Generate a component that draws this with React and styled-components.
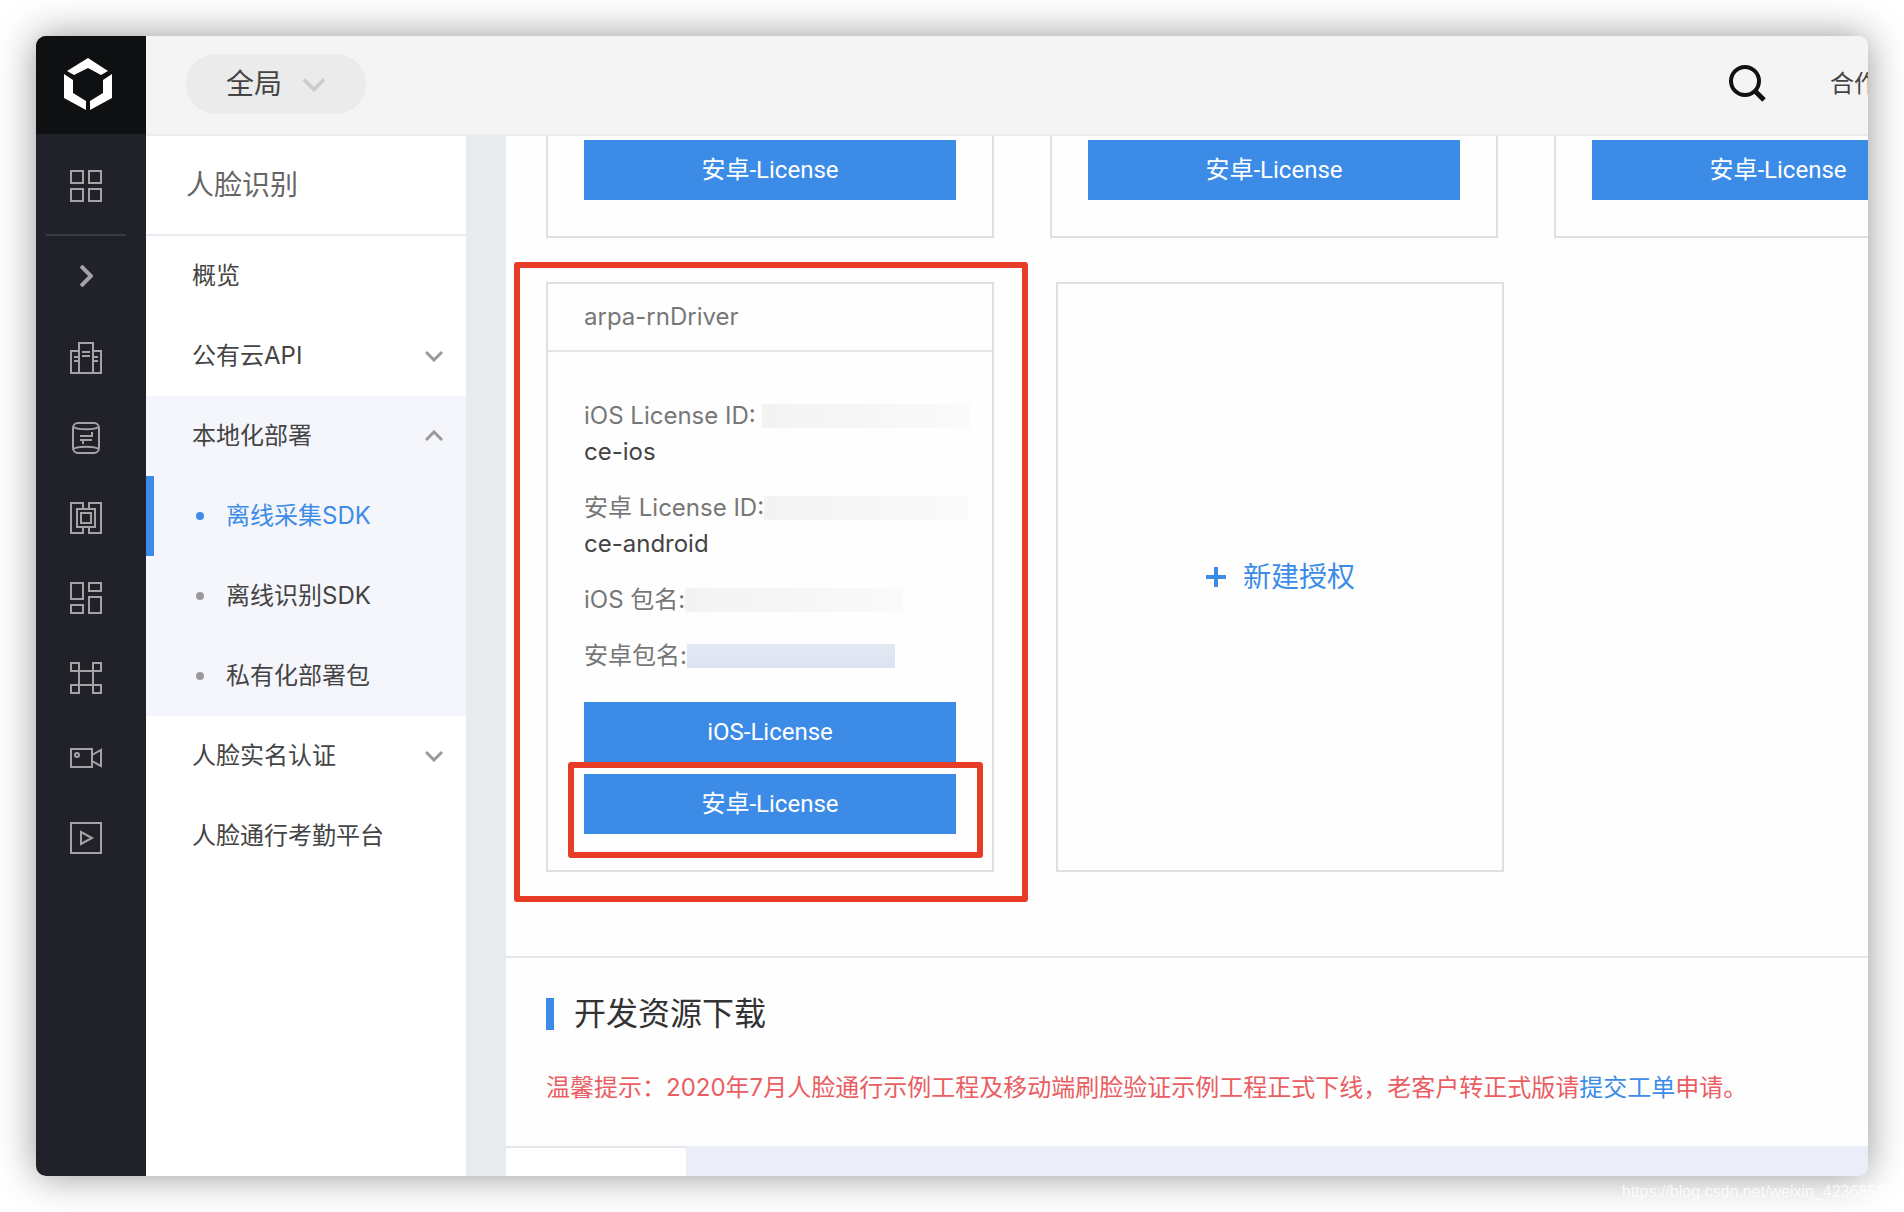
import React from "react";
import styled, { createGlobalStyle, css } from 'styled-components';

const GlobalStyle = createGlobalStyle`
  * {
    box-sizing: border-box;
  }
  body {
    margin: 0;
    background: #ffffff;
    font-family: Inter, "Noto Sans CJK SC", sans-serif;
    font-size: 24px;
    line-height: 36px;
    color: #444444;
  }
  a {
    color: inherit;
    text-decoration: none;
  }
  button {
    margin: 0;
    padding: 0;
    border: none;
    background: none;
    color: inherit;
    font: inherit;
    cursor: pointer;
  }
  svg {
    display: block;
    flex: none;
  }
`

const StyledDesk = styled.div`
  height: 100vh;
  padding: 36px;
  overflow: hidden;
  position: relative;
`

const StyledWindow = styled.div`
  display: flex;
  height: 100%;
  overflow: hidden;
  border-radius: 10px;
  background: #fefefe;
  box-shadow: 0 0 38px rgba(0, 0, 0, 0.42);
`

const StyledWatermark = styled.div`
  position: absolute;
  right: 10px;
  bottom: 10px;
  font-family: "Liberation Sans", sans-serif;
  font-size: 16px;
  line-height: 20px;
  color: rgba(255, 255, 255, 0.8);
`

/* ---- 左侧图标栏 ---- */

const StyledRail = styled.nav`
  flex: 0 0 110px;
  background: #21212a;
  color: #a3a3a6;
`

const StyledLogo = styled.a`
  display: flex;
  align-items: center;
  justify-content: center;
  height: 98px;
  padding: 0 6px 2px 0;
  background: #0f1011;
`

const StyledRailItem = styled.button`
  display: flex;
  align-items: center;
  justify-content: center;
  width: 100px;
  height: 80px;
`

const StyledRailHead = styled.div`
  width: 80px;
  height: 102px;
  margin-left: 10px;
  padding-top: 4px;
  border-bottom: 2px solid #3b3b48;
  display: flex;
  align-items: center;
  justify-content: center;
`

const StyledRailList = styled.div`
  padding-top: 2px;
`

/* ---- 顶栏 ---- */

const StyledMain = styled.div`
  flex: 1;
  min-width: 0;
  display: flex;
  flex-direction: column;
`

const StyledTopbar = styled.header`
  flex: none;
  display: flex;
  align-items: center;
  height: 100px;
  padding: 0 0 2px 40px;
  border-bottom: 2px solid #e8ecf0;
  background: #f4f4f4;
`

const StyledScope = styled.button`
  display: flex;
  align-items: center;
  justify-content: center;
  gap: 20px;
  width: 180px;
  height: 60px;
  margin-right: auto;
  border-radius: 30px;
  background: #ebebeb;
  font-size: 28px;
`

const StyledSearch = styled.button`
  margin-right: 64px;
  color: #111111;
`

const StyledTopLink = styled.a`
  width: 38px;
  white-space: nowrap;
`

const StyledBody = styled.div`
  flex: 1;
  min-height: 0;
  display: flex;
`

/* ---- 菜单 ---- */

const StyledMenu = styled.aside`
  flex: 0 0 320px;
  background: #ffffff;
`

const StyledMenuTitle = styled.h2`
  height: 100px;
  margin: 0;
  padding-left: 40px;
  border-bottom: 2px solid #e8ecf0;
  font-size: 28px;
  font-weight: 400;
  line-height: 98px;
  color: #666666;
`

const row = css`
  display: flex;
  align-items: center;
  width: 100%;
  height: 80px;
`

const StyledMenuLink = styled.a`
  ${row}
  padding-left: 46px;
`

const StyledMenuToggle = styled.button`
  ${row}
  justify-content: space-between;
  padding: 0 23px 0 46px;
`

const StyledGroup = styled.div`
  background: #f5f6fb;
`

const StyledSubLink = styled.a`
  ${row}
  gap: 22px;
  padding-left: ${(p) => (p.$active ? 42 : 50)}px;
  border-left: ${(p) => (p.$active ? "8px solid #3c8ce7" : "none")};
  color: ${(p) => (p.$active ? "#3c8ce7" : "#444444")};

  &::before {
    content: "";
    width: 8px;
    height: 8px;
    border-radius: 50%;
    background: ${(p) => (p.$active ? "#3c8ce7" : "#999999")};
  }
`

/* ---- 内容 ---- */

const StyledContent = styled.main`
  flex: 1;
  min-width: 0;
  overflow: hidden;
  border-left: 40px solid #e7ebee;
`

const StyledCardRow = styled.div`
  display: flex;
  gap: ${(p) => p.$gap}px;
  margin-bottom: ${(p) => p.$below}px;
  padding-left: 40px;
`

const StyledCard = styled.section`
  position: relative;
  flex: 0 0 448px;
  min-width: 0;
  border: 2px solid #dedfe0;
`

const StyledCutCard = styled(StyledCard)`
  padding: 4px 36px 36px;
  border-top: none;
`

const StyledCardTitle = styled.h3`
  height: 68px;
  margin: 0;
  padding-left: 36px;
  border-bottom: 2px solid #e4e6ec;
  font-size: 24px;
  font-weight: 400;
  line-height: 66px;
  color: #777777;
`

const StyledCardBody = styled.div`
  padding: 46px 36px 36px;
`

const StyledField = styled.div`
  margin-bottom: ${(p) => (p.$last ? 28 : 20)}px;
`

const StyledFieldLine = styled.div`
  display: flex;
  align-items: center;
  height: 36px;
  white-space: nowrap;
  color: #777777;
`

const StyledMask = styled.span`
  flex: none;
  width: ${(p) => p.$width}px;
  height: 24px;
  margin-left: ${(p) => p.$gap || 0}px;
  background: ${(p) => (p.$blue ? "linear-gradient(#e4e8f2, #dbe3f4)" : "linear-gradient(90deg, #f3f3f4, #fafafa)")};
`

const StyledButton = styled.button`
  display: block;
  width: 100%;
  height: 60px;
  background: #3c8ce7;
  color: #ffffff;
  font-family: Roboto, "Noto Sans CJK SC", sans-serif;
`

const StyledMarked = styled.div`
  position: relative;
  margin-top: 12px;
`

const StyledMark = styled.div`
  position: absolute;
  inset: ${(p) => p.$inset};
  border: 6px solid #e73c25;
  border-radius: 3px;
  pointer-events: none;
`

const StyledAddCard = styled.button`
  flex: 0 0 448px;
  display: flex;
  align-items: center;
  justify-content: center;
  gap: 16px;
  border: 2px solid #dedfe0;
  font-size: 28px;
  color: #3c8ce7;
`

const StyledDownload = styled.section`
  height: 190px;
  padding: 36px 40px 0;
  border-top: 2px solid #e4e6ec;
`

const StyledDownloadTitle = styled.h2`
  display: flex;
  align-items: center;
  gap: 20px;
  margin: 0 0 36px;
  font-size: 32px;
  font-weight: 400;
  line-height: 40px;
  color: #333333;

  &::before {
    content: "";
    width: 8px;
    height: 32px;
    background: #3c8ce7;
  }
`

const StyledNotice = styled.p`
  margin: 0;
  white-space: nowrap;
  color: #ea5e63;

  a {
    color: #3c8ce7;
  }
`

const StyledTabs = styled.div`
  height: 30px;
  background: #ebeef8;
`

const StyledTab = styled.div`
  width: 180px;
  height: 30px;
  border-top: 2px solid #e4e6ec;
  background: #ffffff;
`

const Chevron = ({ up, size = 18, color = "#999999", width = 3 }) => {
  return (
    <svg width={size} height={size / 2 + 3} viewBox="0 0 18 12" fill="none" stroke={color} strokeWidth={width}>
      <path d={up ? "M1 10L9 2L17 10" : "M1 2L9 10L17 2"} />
    </svg>
  )
}

const RailIcon = ({ children }) => {
  return (
    <svg width="32" height="32" viewBox="0 0 32 32" fill="none" stroke="currentColor" strokeWidth="2">
      {children}
    </svg>
  )
}

const railIcons = [
  {
    name: "企业",
    icon: <path d="M9 31V1H23V31M9 9H1V31H31V9H23M12 10H20M12 14H20M4 15H9M4 19H9M23 15H28M23 19H28" />
  },
  {
    name: "数据库",
    icon: <>
      <rect x="3" y="1" width="26" height="30" rx="5" />
      <path d="M4 5C6 8 26 8 28 5M4 27C6 24 26 24 28 27" />
      <path d="M10 14H22V10M22 18H10M13 18V22" />
    </>
  },
  {
    name: "网络",
    icon: <>
      <path d="M13 7V1H1V31H13V25H7V7H25V25H19V31H31V1H19V7M13 25H19" />
      <rect x="11" y="11" width="10" height="10" />
    </>
  },
  {
    name: "应用",
    icon: <path d="M1 1H13V17H1ZM19 1H31V9H19ZM19 15H31V31H19ZM1 23H13V31H1Z" />
  },
  {
    name: "组件",
    icon: <path d="M1 1H9V9H1ZM23 1H31V9H23ZM1 23H9V31H1ZM23 23H31V31H23ZM9 9H23V23H9Z" />
  },
  {
    name: "视频",
    icon: <>
      <path d="M1 7H22V25H1ZM22 13L31 8V24L22 19" />
      <circle cx="7" cy="13" r="2" />
    </>
  },
  {
    name: "播放",
    icon: <path d="M1 1H31V31H1ZM11 10L22 16L11 22Z" />
  }
]

const Rail = () => {
  return (
    <StyledRail>
      <StyledLogo href="#" aria-label="首页">
        <svg width="48" height="52" viewBox="0 0 48 52" fill="#ffffff">
          <path d="M3 13L24 0L44 13L37 17L24 10L10 17Z" />
          <path d="M0 16L9 22V35L22 43V52L0 40Z" />
          <path d="M48 16L39 22V35L26 43V52L48 40Z" />
        </svg>
      </StyledLogo>
      <StyledRailHead>
        <RailIcon><path d="M1 1H13V13H1ZM19 1H31V13H19ZM1 19H13V31H1ZM19 19H31V31H19Z" /></RailIcon>
      </StyledRailHead>
      <StyledRailItem aria-label="展开">
        <svg width="14" height="22" viewBox="0 0 14 22" fill="none" stroke="currentColor" strokeWidth="4">
          <path d="M2 1L12 11L2 21" />
        </svg>
      </StyledRailItem>
      <StyledRailList>
        {railIcons.map((e) => (
          <StyledRailItem key={e.name} aria-label={e.name}>
            <RailIcon>{e.icon}</RailIcon>
          </StyledRailItem>
        ))}
      </StyledRailList>
    </StyledRail>
  )
}

const Topbar = () => {
  return (
    <StyledTopbar>
      <StyledScope>
        全局
        <Chevron size={24} color="#cccccc" />
      </StyledScope>
      <StyledSearch aria-label="搜索">
        <svg width="38" height="38" viewBox="0 0 38 38" fill="none" stroke="currentColor" strokeWidth="4">
          <circle cx="17" cy="16" r="14" />
          <path d="M27 26L36 35" strokeWidth="5" />
        </svg>
      </StyledSearch>
      <StyledTopLink href="#">合作</StyledTopLink>
    </StyledTopbar>
  )
}

const Menu = () => {
  return (
    <StyledMenu>
      <StyledMenuTitle>人脸识别</StyledMenuTitle>
      <StyledMenuLink href="#">概览</StyledMenuLink>
      <StyledMenuToggle>公有云API<Chevron /></StyledMenuToggle>
      <StyledGroup>
        <StyledMenuToggle>本地化部署<Chevron up /></StyledMenuToggle>
        <StyledSubLink href="#" $active>离线采集SDK</StyledSubLink>
        <StyledSubLink href="#">离线识别SDK</StyledSubLink>
        <StyledSubLink href="#">私有化部署包</StyledSubLink>
      </StyledGroup>
      <StyledMenuToggle>人脸实名认证<Chevron /></StyledMenuToggle>
      <StyledMenuLink href="#">人脸通行考勤平台</StyledMenuLink>
    </StyledMenu>
  )
}

const LicenseCard = () => {
  return (
    <StyledCard>
      <StyledCardTitle>arpa-rnDriver</StyledCardTitle>
      <StyledCardBody>
        <StyledField>
          <StyledFieldLine>iOS License ID:<StyledMask $width={208} $gap={6} /></StyledFieldLine>
          ce-ios
        </StyledField>
        <StyledField>
          <StyledFieldLine>安卓 License ID:<StyledMask $width={204} /></StyledFieldLine>
          ce-android
        </StyledField>
        <StyledField>
          <StyledFieldLine>iOS 包名:<StyledMask $width={218} /></StyledFieldLine>
        </StyledField>
        <StyledField $last>
          <StyledFieldLine>安卓包名:<StyledMask $width={208} $blue /></StyledFieldLine>
        </StyledField>
        <StyledButton>iOS-License</StyledButton>
        <StyledMarked>
          <StyledButton>安卓-License</StyledButton>
          <StyledMark $inset="-12px -27px -24px -16px" />
        </StyledMarked>
      </StyledCardBody>
      <StyledMark $inset="-22px -36px -32px -34px" />
    </StyledCard>
  )
}

const Content = () => {
  return (
    <StyledContent>
      <StyledCardRow $gap={56} $below={44}>
        {[1, 2, 3].map((e) => (
          <StyledCutCard key={e}>
            <StyledButton>安卓-License</StyledButton>
          </StyledCutCard>
        ))}
      </StyledCardRow>
      <StyledCardRow $gap={62} $below={84}>
        <LicenseCard />
        <StyledAddCard>
          <svg width="22" height="22" viewBox="0 0 22 22" stroke="currentColor" strokeWidth="4">
            <path d="M11 1V21M1 11H21" />
          </svg>
          新建授权
        </StyledAddCard>
      </StyledCardRow>
      <StyledDownload>
        <StyledDownloadTitle>开发资源下载</StyledDownloadTitle>
        <StyledNotice>
          温馨提示：2020年7月人脸通行示例工程及移动端刷脸验证示例工程正式下线，老客户转正式版请<a href="#">提交工单</a>申请。
        </StyledNotice>
      </StyledDownload>
      <StyledTabs>
        <StyledTab />
      </StyledTabs>
    </StyledContent>
  )
}

const App = () => {
  return (
    <StyledDesk>
      <GlobalStyle />
      <StyledWindow>
        <Rail />
        <StyledMain>
          <Topbar />
          <StyledBody>
            <Menu />
            <Content />
          </StyledBody>
        </StyledMain>
      </StyledWindow>
      <StyledWatermark>https://blog.csdn.net/weixin_42368597</StyledWatermark>
    </StyledDesk>
  )
}

export default App;
